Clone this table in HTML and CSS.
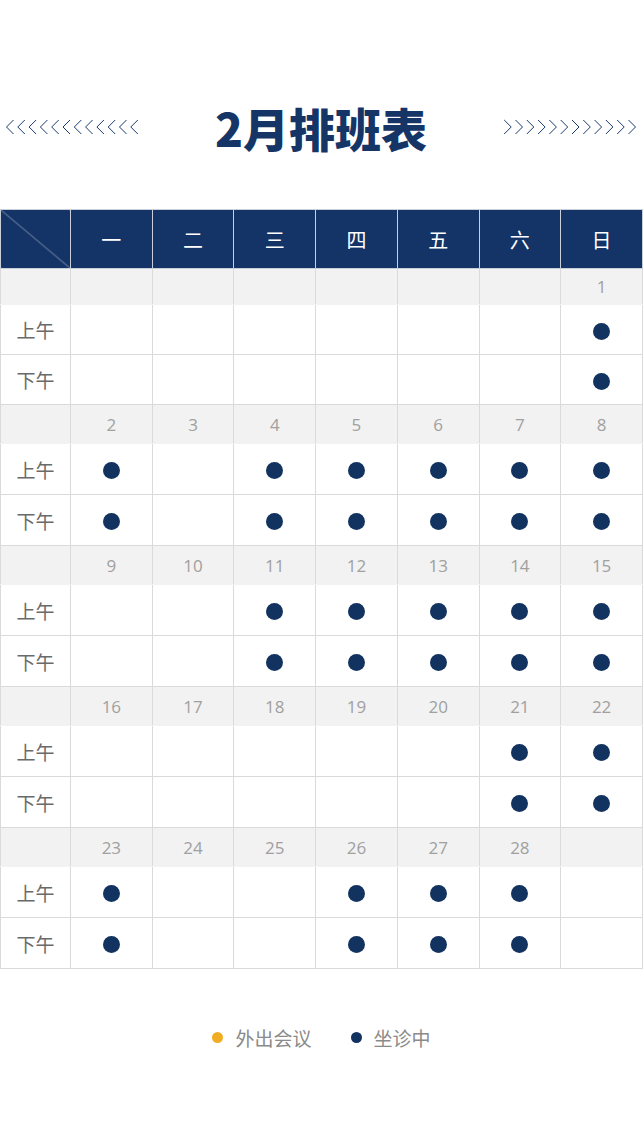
FILE: index.html
```html
<!DOCTYPE html>
<html lang="zh-CN">
<head>
<meta charset="utf-8">
<title>2月排班表</title>
<link rel="stylesheet" href="styles.css">
</head>
<body>
<div class="page">
  <div class="title-bar">
    <svg class="chevrons" width="136" height="16" viewBox="0 0 136 16">
      <g fill="none" stroke="#1a3a6e" stroke-width="1">
        <polyline points="8.5,1 1.5,8 8.5,15"/>
        <polyline points="19.8,1 12.8,8 19.8,15"/>
        <polyline points="31.1,1 24.1,8 31.1,15"/>
        <polyline points="42.4,1 35.4,8 42.4,15"/>
        <polyline points="53.7,1 46.7,8 53.7,15"/>
        <polyline points="65,1 58,8 65,15"/>
        <polyline points="76.3,1 69.3,8 76.3,15"/>
        <polyline points="87.6,1 80.6,8 87.6,15"/>
        <polyline points="98.9,1 91.9,8 98.9,15"/>
        <polyline points="110.2,1 103.2,8 110.2,15"/>
        <polyline points="121.5,1 114.5,8 121.5,15"/>
        <polyline points="132.8,1 125.8,8 132.8,15"/>
      </g>
    </svg>
    <h1 class="title">2月排班表</h1>
    <svg class="chevrons" width="136" height="16" viewBox="0 0 136 16">
      <g fill="none" stroke="#1a3a6e" stroke-width="1">
        <polyline points="3.2,1 10.2,8 3.2,15"/>
        <polyline points="14.5,1 21.5,8 14.5,15"/>
        <polyline points="25.8,1 32.8,8 25.8,15"/>
        <polyline points="37.1,1 44.1,8 37.1,15"/>
        <polyline points="48.4,1 55.4,8 48.4,15"/>
        <polyline points="59.7,1 66.7,8 59.7,15"/>
        <polyline points="71,1 78,8 71,15"/>
        <polyline points="82.3,1 89.3,8 82.3,15"/>
        <polyline points="93.6,1 100.6,8 93.6,15"/>
        <polyline points="104.9,1 111.9,8 104.9,15"/>
        <polyline points="116.2,1 123.2,8 116.2,15"/>
        <polyline points="127.5,1 134.5,8 127.5,15"/>
      </g>
    </svg>
  </div>

  <table class="schedule">
    <colgroup>
      <col class="col-label">
      <col><col><col><col><col><col><col>
    </colgroup>
    <thead>
      <tr class="head-row">
        <th class="corner"></th>
        <th>一</th><th>二</th><th>三</th><th>四</th><th>五</th><th>六</th><th>日</th>
      </tr>
    </thead>
    <tbody>
      <!-- week 1 -->
      <tr class="date-row first">
        <td></td><td></td><td></td><td></td><td></td><td></td><td></td><td>1</td>
      </tr>
      <tr class="slot-row first">
        <td class="label">上午</td><td></td><td></td><td></td><td></td><td></td><td></td><td><span class="dot"></span></td>
      </tr>
      <tr class="slot-row first">
        <td class="label">下午</td><td></td><td></td><td></td><td></td><td></td><td></td><td><span class="dot"></span></td>
      </tr>
      <!-- week 2 -->
      <tr class="date-row">
        <td></td><td>2</td><td>3</td><td>4</td><td>5</td><td>6</td><td>7</td><td>8</td>
      </tr>
      <tr class="slot-row">
        <td class="label">上午</td><td><span class="dot"></span></td><td></td><td><span class="dot"></span></td><td><span class="dot"></span></td><td><span class="dot"></span></td><td><span class="dot"></span></td><td><span class="dot"></span></td>
      </tr>
      <tr class="slot-row">
        <td class="label">下午</td><td><span class="dot"></span></td><td></td><td><span class="dot"></span></td><td><span class="dot"></span></td><td><span class="dot"></span></td><td><span class="dot"></span></td><td><span class="dot"></span></td>
      </tr>
      <!-- week 3 -->
      <tr class="date-row">
        <td></td><td>9</td><td>10</td><td>11</td><td>12</td><td>13</td><td>14</td><td>15</td>
      </tr>
      <tr class="slot-row">
        <td class="label">上午</td><td></td><td></td><td><span class="dot"></span></td><td><span class="dot"></span></td><td><span class="dot"></span></td><td><span class="dot"></span></td><td><span class="dot"></span></td>
      </tr>
      <tr class="slot-row">
        <td class="label">下午</td><td></td><td></td><td><span class="dot"></span></td><td><span class="dot"></span></td><td><span class="dot"></span></td><td><span class="dot"></span></td><td><span class="dot"></span></td>
      </tr>
      <!-- week 4 -->
      <tr class="date-row">
        <td></td><td>16</td><td>17</td><td>18</td><td>19</td><td>20</td><td>21</td><td>22</td>
      </tr>
      <tr class="slot-row">
        <td class="label">上午</td><td></td><td></td><td></td><td></td><td></td><td><span class="dot"></span></td><td><span class="dot"></span></td>
      </tr>
      <tr class="slot-row">
        <td class="label">下午</td><td></td><td></td><td></td><td></td><td></td><td><span class="dot"></span></td><td><span class="dot"></span></td>
      </tr>
      <!-- week 5 -->
      <tr class="date-row">
        <td></td><td>23</td><td>24</td><td>25</td><td>26</td><td>27</td><td>28</td><td></td>
      </tr>
      <tr class="slot-row">
        <td class="label">上午</td><td><span class="dot"></span></td><td></td><td></td><td><span class="dot"></span></td><td><span class="dot"></span></td><td><span class="dot"></span></td><td></td>
      </tr>
      <tr class="slot-row">
        <td class="label">下午</td><td><span class="dot"></span></td><td></td><td></td><td><span class="dot"></span></td><td><span class="dot"></span></td><td><span class="dot"></span></td><td></td>
      </tr>
    </tbody>
  </table>

  <div class="legend">
    <div class="legend-item"><span class="legend-dot orange"></span>外出会议</div>
    <div class="legend-item"><span class="legend-dot navy"></span>坐诊中</div>
  </div>
</div>
</body>
</html>
```

FILE: styles.css
```css
* {
  box-sizing: border-box;
}

html, body {
  margin: 0;
  padding: 0;
  background: #ffffff;
}

body {
  font-family: "Open Sans", "Noto Sans CJK SC", "Noto Sans", sans-serif;
  color: #666666;
}

.page {
  width: 643px;
}

.title-bar {
  height: 80px;
  margin-top: 87px;
  margin-bottom: 42px;
  display: flex;
  align-items: center;
  justify-content: space-between;
  padding: 0 6px 0 5px;
}

.chevrons {
  display: block;
}

.title {
  margin: 0;
  font-family: "Noto Sans CJK SC", sans-serif;
  font-weight: 900;
  font-size: 46px;
  line-height: 1;
  color: #163567;
  letter-spacing: 0;
}

.schedule {
  width: 643px;
  border-collapse: collapse;
  table-layout: fixed;
}

.col-label {
  width: 70px;
}

.schedule th,
.schedule td {
  border: 1px solid #dadada;
  padding: 0;
  text-align: center;
  vertical-align: middle;
}

.head-row th {
  height: 59px;
  background: #143366;
  color: #ffffff;
  font-family: "Noto Sans CJK SC", sans-serif;
  font-weight: 400;
  font-size: 20px;
  border-color: #c9cfd9;
}

.head-row th.corner {
  background:
    linear-gradient(to top right, transparent calc(50% - 0.7px), #8c9bb6 50%, transparent calc(50% + 0.7px)),
    #143366;
}

.date-row td {
  height: 39px;
  background: #f2f2f2;
  color: #a0a0a0;
  font-size: 17px;
  border-top-color: #dadada;
  border-bottom-color: #f2f2f2;
}

.date-row.first td {
  height: 36px;
}

.slot-row td {
  height: 51px;
  background: #ffffff;
}

.slot-row.first td {
  height: 50px;
}

.slot-row td.label {
  font-family: "Noto Sans CJK SC", sans-serif;
  font-size: 19px;
  color: #6a6a6a;
}

.dot {
  display: inline-block;
  width: 17px;
  height: 17px;
  border-radius: 50%;
  background: #12325f;
  vertical-align: middle;
}

.legend {
  margin-top: 56px;
  height: 24px;
  display: flex;
  justify-content: center;
  align-items: center;
  gap: 39px;
}

.legend-item {
  display: flex;
  align-items: center;
  gap: 12px;
  font-family: "Noto Sans CJK SC", sans-serif;
  font-size: 19px;
  color: #8a8a8a;
}

.legend-dot {
  width: 11px;
  height: 11px;
  border-radius: 50%;
}

.legend-dot.orange {
  background: #f0ad22;
}

.legend-dot.navy {
  background: #12325f;
}
```
